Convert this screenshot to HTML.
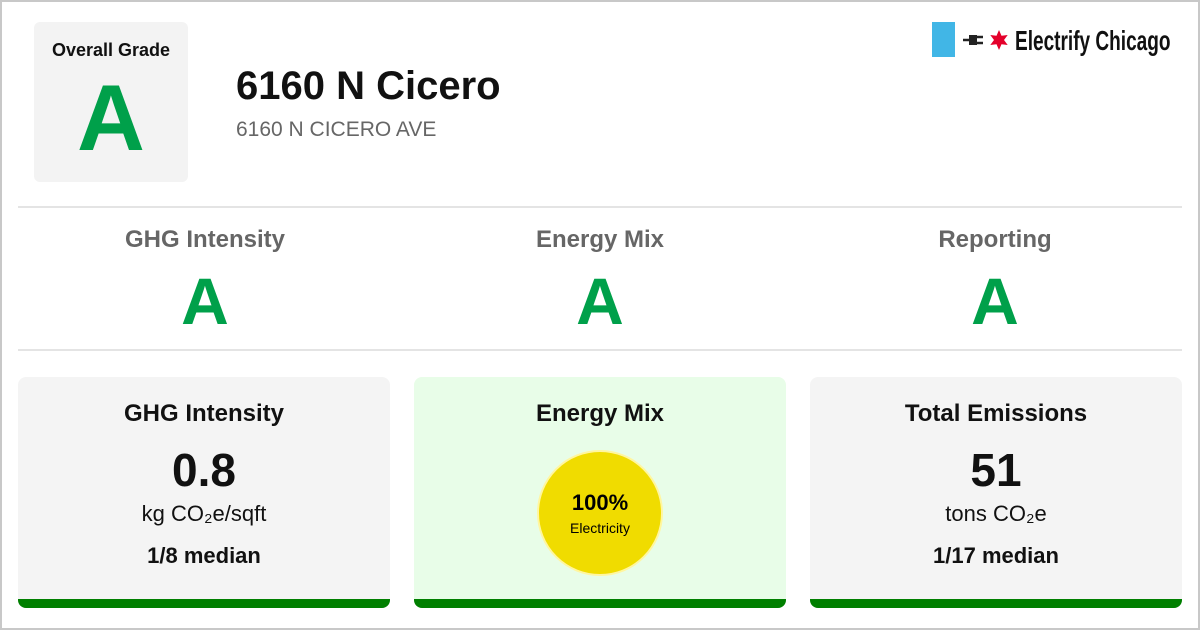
<!DOCTYPE html>
<html><head><style>
*{margin:0;padding:0;box-sizing:border-box}
body{width:1200px;height:630px;background:#fff;font-family:"Liberation Sans",Arial,sans-serif;position:relative;overflow:hidden}
.frame{position:absolute;left:0;top:0;width:1200px;height:630px;border:2px solid #c8c8c8}
.grade{position:absolute;left:34px;top:22px;width:154px;height:160px;background:#f3f3f3;border-radius:6px;text-align:center}
.grade .t{font-weight:bold;font-size:18px;margin-top:18px;color:#111}
.grade .g{font-weight:bold;font-size:94px;color:#00a04a;line-height:94px;margin-top:10px}
h1{position:absolute;left:236px;top:64px;font-size:40px;font-weight:bold;color:#111}
.addr{position:absolute;left:236px;top:118px;font-size:21px;color:#666}
.hr{position:absolute;left:18px;width:1164px;height:2px;background:#e4e4e4}
.col{position:absolute;top:226px;width:394px;text-align:center}
.col .t{font-size:24px;font-weight:bold;color:#666}
.col .g{font-size:66px;font-weight:bold;color:#00a04a;line-height:66px;margin-top:14px}
.card{position:absolute;top:377px;width:372px;height:231px;background:#f4f4f4;border-radius:8px;text-align:center;overflow:hidden}
.card .bar{position:absolute;left:0;bottom:0;width:100%;height:9px;background:#007f00}
.card .t{font-size:24px;font-weight:bold;margin-top:23px;color:#111}
.card .v{font-size:46px;font-weight:bold;margin-top:17px;line-height:50px;color:#111}
.card .u{font-size:22px;margin-top:6px;color:#111}
.card .m{font-size:22px;font-weight:bold;margin-top:16px;color:#111}
.circ{width:126px;height:126px;border-radius:50%;background:#f0dc00;margin:22px auto 0;padding-top:38px;border:2px solid #fff6a0}
</style></head><body>
<div class="frame"></div>
<div class="grade"><div class="t">Overall Grade</div><div class="g">A</div></div>
<h1>6160 N Cicero</h1>
<div class="addr">6160 N CICERO AVE</div>
<div style="position:absolute;left:932px;top:22px;width:23px;height:35px;background:#41b6e6"></div>
<svg style="position:absolute;left:962px;top:31px" width="24" height="18" viewBox="0 0 24 18"><path d="M1 9h6M15 6h6M15 12h6" stroke="#222" stroke-width="2.5" fill="none"/><path d="M7 4h8v10H7z" fill="#222"/></svg>
<svg style="position:absolute;left:988px;top:29px" width="22" height="22" viewBox="-11 -11 22 22"><polygon fill="#e4002b" points="0,-10 2.5,-4.3 8.7,-5 5,0 8.7,5 2.5,4.3 0,10 -2.5,4.3 -8.7,5 -5,0 -8.7,-5 -2.5,-4.3"/></svg>
<div style="position:absolute;left:1015px;top:25px;font-size:28px;font-weight:bold;color:#111;transform:scaleX(0.68);transform-origin:left;white-space:nowrap">Electrify Chicago</div>
<div class="hr" style="top:206px"></div>
<div class="hr" style="top:349px"></div>
<div class="col" style="left:8px"><div class="t">GHG Intensity</div><div class="g">A</div></div>
<div class="col" style="left:403px"><div class="t">Energy Mix</div><div class="g">A</div></div>
<div class="col" style="left:798px"><div class="t">Reporting</div><div class="g">A</div></div>
<div class="card" style="left:18px"><div class="t">GHG Intensity</div><div class="v">0.8</div><div class="u">kg CO₂e/sqft</div><div class="m">1/8 median</div><div class="bar"></div></div>
<div class="card" style="left:414px;background:#e8fde8"><div class="t">Energy Mix</div><div class="circ"><div style="font-size:22px;font-weight:bold">100%</div><div style="font-size:14px;margin-top:4px">Electricity</div></div><div class="bar"></div></div>
<div class="card" style="left:810px"><div class="t">Total Emissions</div><div class="v">51</div><div class="u">tons CO₂e</div><div class="m">1/17 median</div><div class="bar"></div></div>
</body></html>
